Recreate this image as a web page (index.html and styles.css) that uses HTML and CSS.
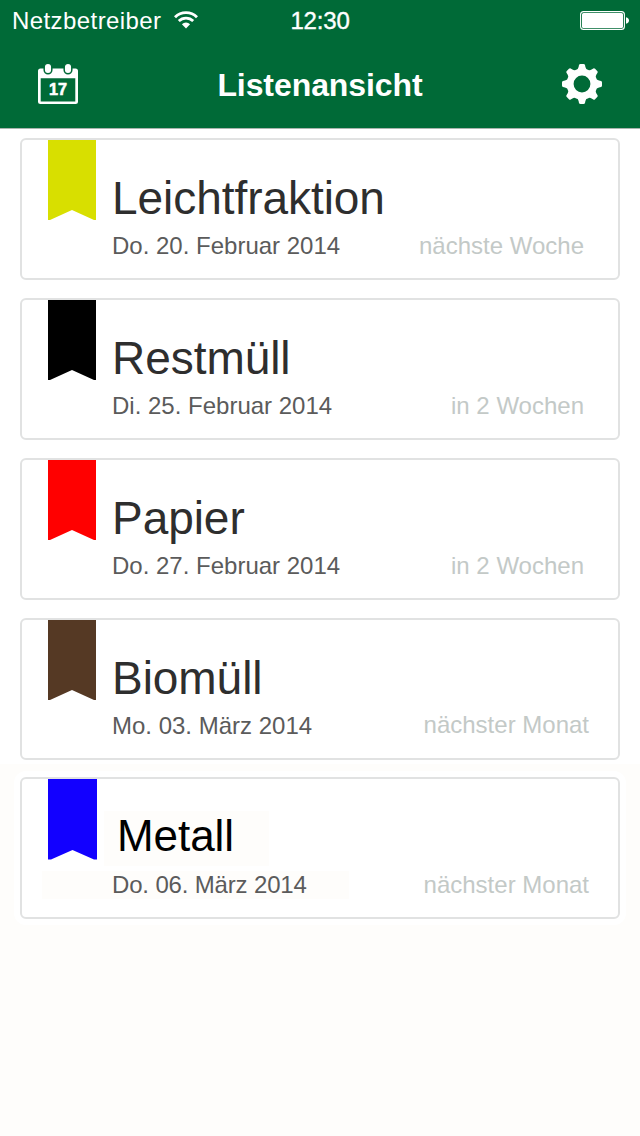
FILE: index.html
```html
<!DOCTYPE html>
<html lang="de">
<head>
<meta charset="utf-8">
<title>Listenansicht</title>
<link rel="stylesheet" href="styles.css">
</head>
<body>
<header class="header">
  <div class="status">
    <div class="carrier"><span>Netzbetreiber</span>
      <svg class="wifi" width="24" height="18" viewBox="0 0 24 18"><g fill="none" stroke="#fff"><path d="M1 6.200a15.500 15.500 0 0 1 22 0" stroke-width="2.900"/><path d="M4.800 10.100a10.200 10.200 0 0 1 14.400 0" stroke-width="2.800"/></g><path d="M12 17.400l-4.100-4.200a5.900 5.900 0 0 1 8.200 0z" fill="#fff"/></svg>
    </div>
    <span class="time">12:30</span>
    <svg class="battery" width="50" height="20" viewBox="0 0 50 20"><rect x=".6" y=".6" width="43.8" height="17.8" rx="3" fill="none" stroke="#fff" stroke-width="1.1"/><rect x="2" y="2" width="41" height="15" rx="1.500" fill="#fff"/><path d="M46 6.200c4 .8 4 5.800 0 6.600z" fill="#fff"/></svg>
  </div>
  <nav class="nav">
    <svg class="icon" width="40" height="42" viewBox="0 0 40 42"><path fill="#fff" fill-rule="evenodd" d="M2.500 4.500h35a2.500 2.500 0 0 1 2.500 2.500v30.500a2.500 2.500 0 0 1-2.500 2.500h-35a2.500 2.500 0 0 1-2.500-2.500V7a2.500 2.500 0 0 1 2.500-2.500zM2.700 14.200v23.200h34.600V14.200z"/><g fill="#fff" stroke="#006a37" stroke-width="1.500"><rect x="6.200" y="-.8" width="7.600" height="10.600" rx="3.800"/><rect x="26.200" y="-.8" width="7.600" height="10.600" rx="3.800"/></g><text class="day" x="20" y="31.400" text-anchor="middle" textLength="18" lengthAdjust="spacingAndGlyphs">17</text></svg>
    <h1 class="heading">Listenansicht</h1>
    <svg class="icon" width="40" height="40" viewBox="-20 -20 40 40"><defs><path id="tooth" d="M-5.200-13L-3.400-17L-3-19Q-2.700-20-1.500-20H1.500Q2.700-20 3-19L3.400-17L5.200-13z"/></defs><g fill="#fff"><use href="#tooth"/><use href="#tooth" transform="rotate(45)"/><use href="#tooth" transform="rotate(90)"/><use href="#tooth" transform="rotate(135)"/><use href="#tooth" transform="rotate(180)"/><use href="#tooth" transform="rotate(225)"/><use href="#tooth" transform="rotate(270)"/><use href="#tooth" transform="rotate(315)"/></g><circle r="11.900" fill="none" stroke="#fff" stroke-width="7"/></svg>
  </nav>
</header>
<main class="list">
  <article class="card">
    <svg class="ribbon yellow" width="48" height="80" viewBox="0 0 48 80"><path d="M0 0h48v80h-2L24 70 2 80H0z"/></svg>
    <div class="info"><h2 class="name">Leichtfraktion</h2><div class="row"><span class="date">Do. 20. Februar 2014</span><span class="due">nächste Woche</span></div></div>
  </article>
  <article class="card">
    <svg class="ribbon black" width="48" height="80" viewBox="0 0 48 80"><path d="M0 0h48v80h-2L24 70 2 80H0z"/></svg>
    <div class="info"><h2 class="name">Restmüll</h2><div class="row"><span class="date">Di. 25. Februar 2014</span><span class="due">in 2 Wochen</span></div></div>
  </article>
  <article class="card">
    <svg class="ribbon red" width="48" height="80" viewBox="0 0 48 80"><path d="M0 0h48v80h-2L24 70 2 80H0z"/></svg>
    <div class="info"><h2 class="name">Papier</h2><div class="row"><span class="date">Do. 27. Februar 2014</span><span class="due">in 2 Wochen</span></div></div>
  </article>
  <article class="card">
    <svg class="ribbon brown" width="48" height="80" viewBox="0 0 48 80"><path d="M0 0h48v80h-2L24 70 2 80H0z"/></svg>
    <div class="info"><h2 class="name">Biomüll</h2><div class="row month"><span class="date">Mo. 03. März 2014</span><span class="due raised">nächster Monat</span></div></div>
  </article>
  <article class="card last">
    <svg class="ribbon blue" width="49" height="81" viewBox="0 0 49 81"><path d="M0 0h49v80.500h-3L24.500 71 3 80.500H0z"/></svg>
    <div class="info"><h2 class="name metal">Metall</h2><div class="row month"><span class="date">Do. 06. März 2014</span><span class="due">nächster Monat</span></div></div>
  </article>
</main>
</body>
</html>
```
FILE: styles.css
```css
* { box-sizing: border-box; }
body {
  margin: 0;
  min-height: 1136px;
  font-family: "Liberation Sans", Arial, sans-serif;
  background: linear-gradient(#fff 764px, #fefdfb 764px);
}
.header {
  height: 129px;
  background: #006a37;
  border-bottom: 1px solid #a9b5ae;
  color: #fff;
}
.status {
  display: grid;
  grid-template-columns: 1fr auto 1fr;
  height: 40px;
  padding: 0 10px 0 12px;
  font-size: 24px;
  line-height: 42px;
}
.carrier { display: flex; gap: 12px; letter-spacing: .42px; }
.wifi { margin-top: 11px; }
.time {
  margin-left: -2px;
  letter-spacing: -.2px;
  -webkit-text-stroke: .4px #fff;
}
.battery { justify-self: end; margin-top: 11px; }
.nav {
  display: flex;
  justify-content: space-between;
  height: 88px;
  padding: 24px 38px 0;
}
.icon { display: block; overflow: visible; }
.day {
  font: bold 16.500px "Liberation Sans", Arial, sans-serif;
  fill: #fff;
  stroke: #fff;
  stroke-width: .6px;
}
.heading { margin: 0; font-size: 32px; line-height: 42px; letter-spacing: -.08px; }
.list {
  display: flex;
  flex-direction: column;
  gap: 18px;
  padding: 9px 20px 0;
}
.card {
  display: flex;
  gap: 16px;
  height: 142px;
  padding: 0 34px 0 26px;
  border: 2px solid #e1e2e2;
  border-radius: 6px;
  background: #fff;
}
.last { margin-top: -1px; gap: 15px; box-shadow: 0 0 0 6px #fff; }
.ribbon { display: block; flex: none; }
.yellow { fill: #d8df00; }
.black { fill: #000; }
.red { fill: #f00; }
.brown { fill: #553924; }
.blue { fill: #1200ff; }
.info { flex: 1; padding-top: 33px; }
.name {
  margin: 0 0 9px;
  font-size: 46px;
  font-weight: 400;
  line-height: 50px;
  letter-spacing: -.05px;
  color: #2e2e2e;
}
.metal {
  width: 157px;
  margin: -1px 0 10px;
  padding-left: 5px;
  font-size: 44px;
  color: #000;
  background: #fefdfb;
  box-shadow: -8px 0 #fefdfb, 0 5px #fefdfb, -8px 5px #fefdfb;
}
.row {
  display: flex;
  justify-content: space-between;
  font-size: 24px;
  line-height: 28px;
}
.month { margin-right: -5px; }
.date { color: #5b5b5b; }
.last .date {
  width: 237px;
  letter-spacing: -.16px;
  background: #fefdfb;
  box-shadow: -70px 0 #fefdfb;
}
.due { color: #c3c9c7; }
.raised { margin-top: -1px; }
```
